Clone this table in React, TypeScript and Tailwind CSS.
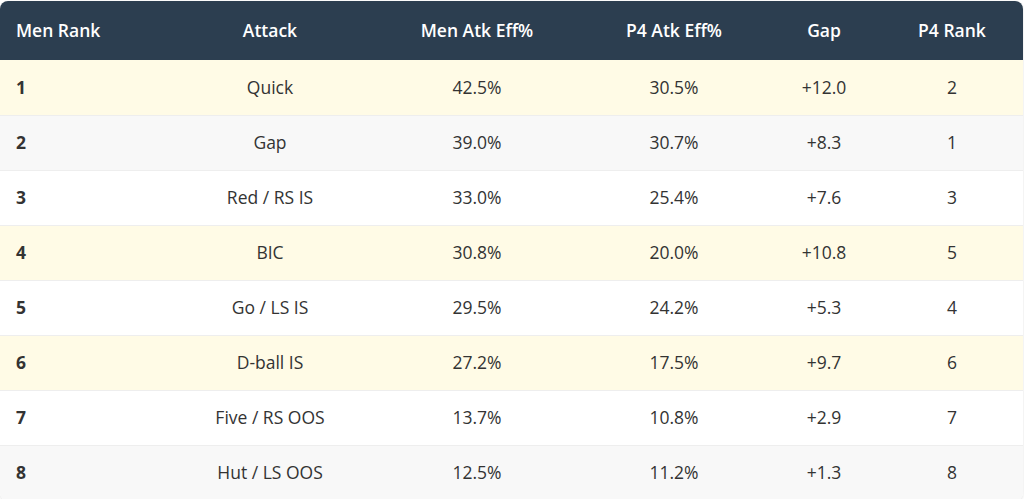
import React from "react";

const rows = [
  { r: "1", a: "Quick", m: "42.5%", p: "30.5%", g: "+12.0", pr: "2", hl: true },
  { r: "2", a: "Gap", m: "39.0%", p: "30.7%", g: "+8.3", pr: "1", hl: false },
  { r: "3", a: "Red / RS IS", m: "33.0%", p: "25.4%", g: "+7.6", pr: "3", hl: false },
  { r: "4", a: "BIC", m: "30.8%", p: "20.0%", g: "+10.8", pr: "5", hl: true },
  { r: "5", a: "Go / LS IS", m: "29.5%", p: "24.2%", g: "+5.3", pr: "4", hl: false },
  { r: "6", a: "D-ball IS", m: "27.2%", p: "17.5%", g: "+9.7", pr: "6", hl: true },
  { r: "7", a: "Five / RS OOS", m: "13.7%", p: "10.8%", g: "+2.9", pr: "7", hl: false },
  { r: "8", a: "Hut / LS OOS", m: "12.5%", p: "11.2%", g: "+1.3", pr: "8", hl: false },
];

export default function App() {
  return (
    <div className="w-[1024px] h-[499px] bg-white pt-[1px] overflow-hidden" style={{ fontFamily: '"Open Sans", "Noto Sans", sans-serif' }}>
      <div className="w-[1023px] rounded-lg overflow-hidden shadow-[0_1px_3px_rgba(0,0,0,0.12)]">
        <table className="w-full table-fixed border-collapse text-[17.5px] text-[#333]">
          <colgroup>
            <col className="w-[167px]" />
            <col className="w-[206px]" />
            <col className="w-[208px]" />
            <col className="w-[186px]" />
            <col className="w-[114px]" />
            <col className="w-[142px]" />
          </colgroup>
          <thead>
            <tr className="bg-[#2c3e50] text-white h-[59px]">
              <th className="text-left pl-4 font-semibold">Men Rank</th>
              <th className="text-center font-semibold">Attack</th>
              <th className="text-center font-semibold">Men Atk Eff%</th>
              <th className="text-center font-semibold">P4 Atk Eff%</th>
              <th className="text-center font-semibold">Gap</th>
              <th className="text-center font-semibold">P4 Rank</th>
            </tr>
          </thead>
          <tbody>
            {rows.map((row, i) => (
              <tr
                key={row.r}
                className={
                  "h-[55px] border-b border-[#eeeeee] " +
                  (row.hl ? "bg-[#fffbe6]" : i % 2 === 1 ? "bg-[#f8f8f8]" : "bg-white")
                }
              >
                <td className="text-left pl-4 font-bold">{row.r}</td>
                <td className="text-center">{row.a}</td>
                <td className="text-center">{row.m}</td>
                <td className="text-center">{row.p}</td>
                <td className="text-center">{row.g}</td>
                <td className="text-center">{row.pr}</td>
              </tr>
            ))}
          </tbody>
        </table>
      </div>
    </div>
  );
}
